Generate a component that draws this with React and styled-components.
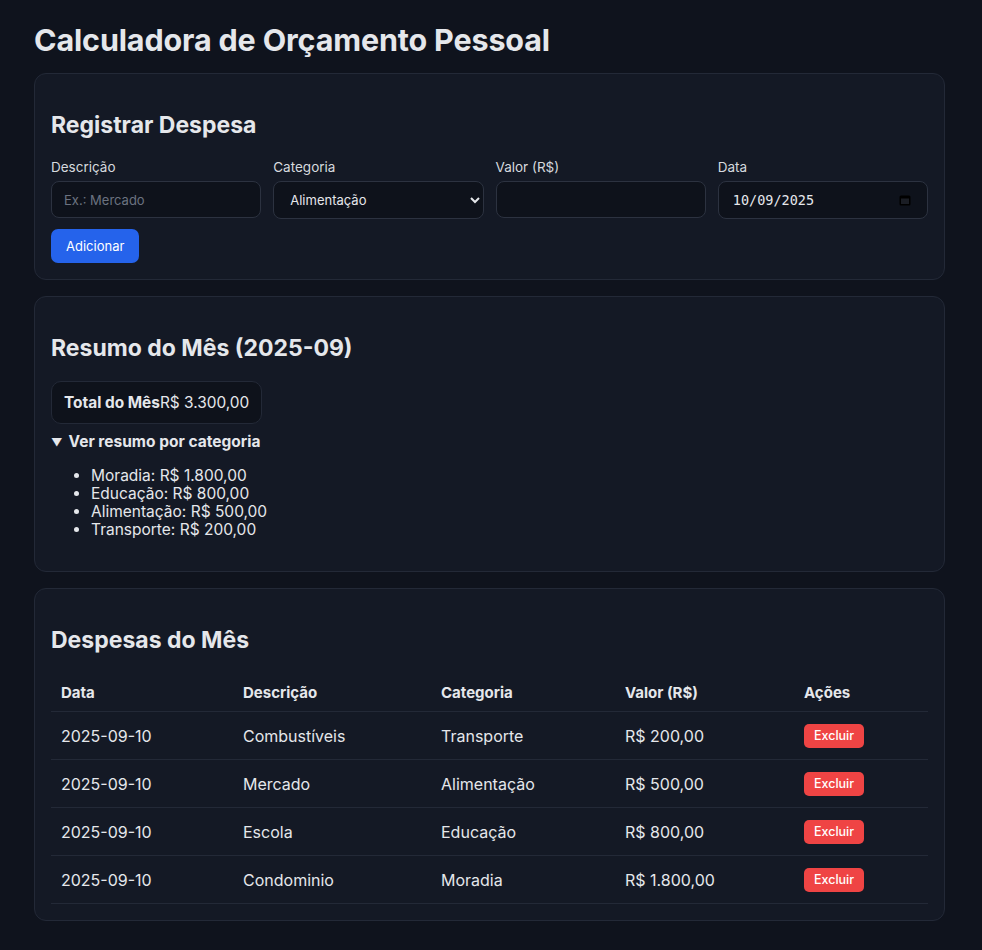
import React from 'react';
import styled, { createGlobalStyle } from 'styled-components';

const colors = {
  page: '#0f131d',
  card: '#141925',
  border: '#232937',
  field: '#0e121b',
  fieldBorder: '#2c3240',
  text: '#e5e7eb',
  label: '#d6d9df',
  muted: '#6b7280',
  blue: '#2563eb',
  red: '#ef4444',
};

const GlobalStyle = createGlobalStyle`
  body {
    margin: 0;
    background: ${colors.page};
    color: ${colors.text};
    font-family: Inter, "Noto Sans", "Liberation Sans", sans-serif;
  }
`;

const Page = styled.main`
  width: 911px;
  margin-left: 34px;
  padding-bottom: 28px;
`;

const Title = styled.h1`
  font-size: 30.5px;
  line-height: 36px;
  font-weight: 700;
  letter-spacing: -0.15px;
  margin: 22px 0 15px;
`;

const Card = styled.section`
  background: ${colors.card};
  border: 1px solid ${colors.border};
  border-radius: 12px;
  padding: 0 16px 16px;
  margin-bottom: 16px;
`;

const CardTitle = styled.h2`
  font-size: 23px;
  line-height: 28px;
  font-weight: 700;
  margin: 37px 0 19px;
`;

const FormGrid = styled.div`
  display: grid;
  grid-template-columns: repeat(4, minmax(0, 1fr));
  gap: 12px;
`;

const Field = styled.label`
  display: flex;
  flex-direction: column;
  gap: 5px;
  min-width: 0;
  font-size: 13.5px;
  line-height: 18px;
  color: ${colors.label};
`;

const fieldBox = `
  box-sizing: border-box;
  width: 100%;
  height: 37px;
  background: ${colors.field};
  border: 1px solid ${colors.fieldBorder};
  border-radius: 8px;
  color: ${colors.text};
  font-family: Inter, "Liberation Sans", sans-serif;
  font-size: 13px;
`;

const TextInput = styled.input`
  ${fieldBox}
  padding: 0 12px;
  outline: none;
  &::placeholder {
    color: ${colors.muted};
  }
`;

const Select = styled.select`
  ${fieldBox}
  height: 38px;
  padding: 0 10px 0 12px;
  color-scheme: dark;
  outline: none;
`;

const DateBox = styled.div`
  ${fieldBox}
  height: 38px;
  display: flex;
  align-items: center;
  justify-content: space-between;
  padding: 0 15px 0 14px;
  font-family: "DejaVu Sans Mono", "Liberation Mono", monospace;
  font-size: 13.5px;
`;

const AddButton = styled.button`
  margin-top: 10px;
  height: 34px;
  padding: 0 15px;
  background: ${colors.blue};
  color: #fff;
  border: 0;
  border-radius: 7px;
  font-family: Inter, "Liberation Sans", sans-serif;
  font-size: 13px;
`;

const TotalBox = styled.div`
  display: inline-flex;
  align-items: center;
  height: 43px;
  box-sizing: border-box;
  padding: 0 12px;
  background: ${colors.field};
  border: 1px solid ${colors.border};
  border-radius: 10px;
  font-size: 15.4px;
  strong {
    font-weight: 700;
  }
`;

const Details = styled.details`
  margin-top: 9px;
  font-size: 15.5px;
  summary {
    font-weight: 700;
    line-height: 18px;
    cursor: pointer;
    list-style: none;
    display: flex;
    align-items: center;
    gap: 6px;
  }
  summary::-webkit-details-marker {
    display: none;
  }
`;

const Arrow = styled.span`
  font-size: 11px;
`;

const CatList = styled.ul`
  margin: 16px 0;
  padding-left: 40px;
  font-size: 15.5px;
  line-height: 18px;
`;

const Table = styled.table`
  width: 100%;
  border-collapse: collapse;
  font-size: 16px;
  th {
    text-align: left;
    font-weight: 700;
    font-size: 15px;
    padding: 10px 10px 9px;
    line-height: 19px;
  }
  td {
    padding: 0 10px;
    height: 47px;
    line-height: 20px;
    vertical-align: middle;
  }
  tr {
    border-bottom: 1px solid ${colors.border};
  }
`;

const DeleteButton = styled.button`
  display: block;
  height: 24px;
  width: 60px;
  background: ${colors.red};
  color: #fff;
  border: 0;
  border-radius: 5px;
  font-family: Inter, "Liberation Sans", sans-serif;
  font-size: 12.5px;
  font-weight: 500;
`;

const CalendarIcon = () => (
  <svg width="14" height="14" viewBox="0 0 14 14">
    <rect x="1.5" y="2.5" width="11" height="10" rx="1.5" fill="#000" />
    <rect x="3" y="5.5" width="8" height="5.5" fill="#1a1d24" />
  </svg>
);

const categories = [
  ['Moradia', 'R$ 1.800,00'],
  ['Educação', 'R$ 800,00'],
  ['Alimentação', 'R$ 500,00'],
  ['Transporte', 'R$ 200,00'],
];

const expenses = [
  { date: '2025-09-10', desc: 'Combustíveis', cat: 'Transporte', value: 'R$ 200,00' },
  { date: '2025-09-10', desc: 'Mercado', cat: 'Alimentação', value: 'R$ 500,00' },
  { date: '2025-09-10', desc: 'Escola', cat: 'Educação', value: 'R$ 800,00' },
  { date: '2025-09-10', desc: 'Condominio', cat: 'Moradia', value: 'R$ 1.800,00' },
];

const App = () => {
  return (
    <Page>
      <GlobalStyle />
      <Title>Calculadora de Orçamento Pessoal</Title>

      <Card>
        <CardTitle>Registrar Despesa</CardTitle>
        <FormGrid>
          <Field>
            Descrição
            <TextInput placeholder="Ex.: Mercado" />
          </Field>
          <Field>
            Categoria
            <Select defaultValue="Alimentação">
              <option>Alimentação</option>
              <option>Transporte</option>
              <option>Educação</option>
              <option>Moradia</option>
            </Select>
          </Field>
          <Field>
            Valor (R$)
            <TextInput />
          </Field>
          <Field as="div">
            Data
            <DateBox>
              <span>10/09/2025</span>
              <CalendarIcon />
            </DateBox>
          </Field>
        </FormGrid>
        <AddButton>Adicionar</AddButton>
      </Card>

      <Card>
        <CardTitle>Resumo do Mês (2025-09)</CardTitle>
        <TotalBox>
          <strong>Total do Mês</strong>R$ 3.300,00
        </TotalBox>
        <Details open>
          <summary>
            <Arrow>▼</Arrow>Ver resumo por categoria
          </summary>
          <CatList>
            {categories.map(([name, value]) => (
              <li key={name}>
                {name}: {value}
              </li>
            ))}
          </CatList>
        </Details>
      </Card>

      <Card>
        <CardTitle>Despesas do Mês</CardTitle>
        <Table>
          <colgroup>
            <col style={{ width: 182 }} />
            <col style={{ width: 198 }} />
            <col style={{ width: 184 }} />
            <col style={{ width: 179 }} />
            <col />
          </colgroup>
          <thead>
            <tr>
              <th>Data</th>
              <th>Descrição</th>
              <th>Categoria</th>
              <th>Valor (R$)</th>
              <th>Ações</th>
            </tr>
          </thead>
          <tbody>
            {expenses.map((e) => (
              <tr key={e.desc}>
                <td>{e.date}</td>
                <td>{e.desc}</td>
                <td>{e.cat}</td>
                <td>{e.value}</td>
                <td>
                  <DeleteButton>Excluir</DeleteButton>
                </td>
              </tr>
            ))}
          </tbody>
        </Table>
      </Card>
    </Page>
  );
};

export default App;
